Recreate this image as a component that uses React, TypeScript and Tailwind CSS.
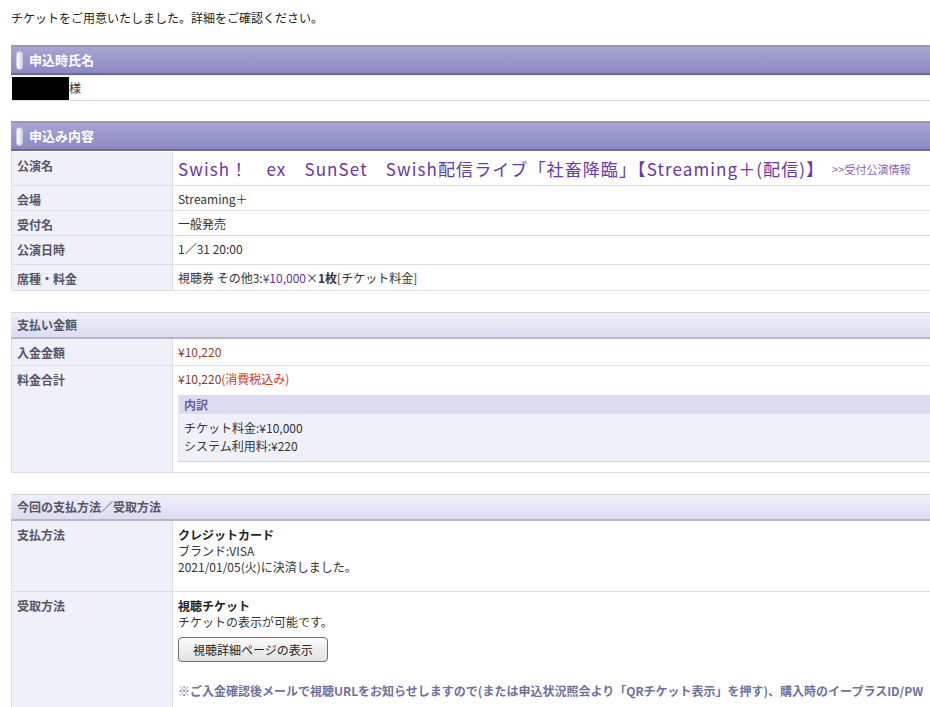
const font = {
  fontFamily: '"MS PGothic", "Noto Sans CJK JP", "Liberation Sans", sans-serif',
};

const PurpleHeader = ({ title }: { title: string }) => (
  <div className="border-t-2 border-t-[#9a99a8] border-b-2 border-b-[#6c6a8e] bg-gradient-to-b from-[#a7a5d3] to-[#8c89c2] h-[30px] flex items-center pl-[5px]">
    <span className="inline-block w-[7px] h-[19px] rounded-full bg-gradient-to-r from-[#ffffff] to-[#d8d8ee] border border-[#c8c8e2]" />
    <span className="ml-[6px] text-[13px] font-bold text-white">{title}</span>
  </div>
);

const LightHeader = ({ title }: { title: string }) => (
  <div className="border-t border-t-[#d4d4e4] border-b-2 border-b-[#b6b6c6] bg-gradient-to-b from-[#efeff9] to-[#dddcf0] h-[27px] flex items-center pl-[6px]">
    <span className="text-[12px] font-bold text-[#555566]">{title}</span>
  </div>
);

const Row = ({
  label,
  children,
  className = "",
}: {
  label: string;
  children: React.ReactNode;
  className?: string;
}) => (
  <div className="flex border-b border-[#dcdce6]">
    <div className="w-[161px] shrink-0 bg-[#f0f0f9] border-r border-[#dcdce6] pl-[5px] pt-[6px] text-[12px] leading-[16px] font-bold text-[#555566]">
      {label}
    </div>
    <div className={"flex-1 pl-[5px] text-[12px] leading-[16px] text-[#333] " + className}>{children}</div>
  </div>
);

export default function App() {
  return (
    <div className="w-full overflow-hidden bg-white min-h-[707px]" style={font}>
      <div className="w-[1000px] pl-[11px] pt-[10px]">
        <p className="text-[12px] text-[#222] leading-[16px]">
          チケットをご用意いたしました。詳細をご確認ください。
        </p>

        <div className="mt-[19px]">
          <PurpleHeader title="申込時氏名" />
          <div className="flex items-center h-[26px] border-t border-[#e8e8ee] border-b border-b-[#dcdce6]">
            <span className="inline-block w-[57px] h-[23px] bg-black ml-[1px]" />
            <span className="text-[12px] text-[#333]">様</span>
          </div>
        </div>

        <div className="mt-[20px]">
          <PurpleHeader title="申込み内容" />
          <div className="border-l border-[#dcdce6] mt-[1px]">
            <Row label="公演名" className="h-[33px] flex items-center">
              <span className="text-[17px] text-[#6a36a8] tracking-[1.1px]">
                Swish！　ex　SunSet　Swish配信ライブ「社畜降臨」【Streaming＋(配信)】
              </span>
              <span className="ml-[8px] text-[11px] text-[#8a62b2]">&gt;&gt;受付公演情報</span>
            </Row>
            <Row label="会場" className="h-[24px] pt-[5px]">Streaming＋</Row>
            <Row label="受付名" className="h-[24px] pt-[5px]">一般発売</Row>
            <Row label="公演日時" className="h-[28px] pt-[5px]">1／31 20:00</Row>
            <Row label="席種・料金" className="h-[25px] pt-[5px]">
              視聴券 その他3:<span className="text-[#6a36a8]">¥10,000</span>×
              <span className="font-bold">1枚</span>[チケット料金]
            </Row>
          </div>
        </div>

        <div className="mt-[21px]">
          <LightHeader title="支払い金額" />
          <div className="border-l border-[#dcdce6]">
            <Row label="入金金額" className="h-[26px] pt-[5px]">
              <span className="text-[#8b3b2b]">¥10,220</span>
            </Row>
            <Row label="料金合計" className="pt-[5px] pb-[10px]">
              <span className="text-[#8b3b2b]">¥10,220</span>
              <span className="text-[#cc3a10]">(消費税込み)</span>
              <div className="mt-[8px] border-b border-[#d4d4e0] border-l border-l-[#e4e4ee]">
                <div className="bg-[#dcdcf0] h-[19px] pl-[5px] flex items-center text-[12px] font-bold text-[#666699]">
                  内訳
                </div>
                <div className="bg-[#f0f0f9] pl-[5px] pt-[5px] pb-[6px] leading-[18px]">
                  <div>チケット料金:¥10,000</div>
                  <div>システム利用料:¥220</div>
                </div>
              </div>
            </Row>
          </div>
        </div>

        <div className="mt-[21px]">
          <LightHeader title="今回の支払方法／受取方法" />
          <div className="border-l border-[#dcdce6]">
            <Row label="支払方法" className="h-[70px] pt-[6px]">
              <div className="font-bold text-[#222]">クレジットカード</div>
              <div>ブランド:VISA</div>
              <div>2021/01/05(火)に決済しました。</div>
            </Row>
            <Row label="受取方法" className="h-[130px] pt-[6px]">
              <div className="font-bold text-[#222]">視聴チケット</div>
              <div>チケットの表示が可能です。</div>
              <button className="mt-[7px] w-[150px] h-[25px] rounded-[4px] border border-[#707070] bg-gradient-to-b from-[#fbfbfb] to-[#e2e2e2] text-[12px] text-[#222]">
                視聴詳細ページの表示
              </button>
              <div className="mt-[21px] font-bold text-[#7070a0] whitespace-nowrap">
                ※ご入金確認後メールで視聴URLをお知らせしますので(または申込状況照会より「QRチケット表示」を押す)、購入時のイープラスID/PW
              </div>
            </Row>
          </div>
        </div>
      </div>
    </div>
  );
}
